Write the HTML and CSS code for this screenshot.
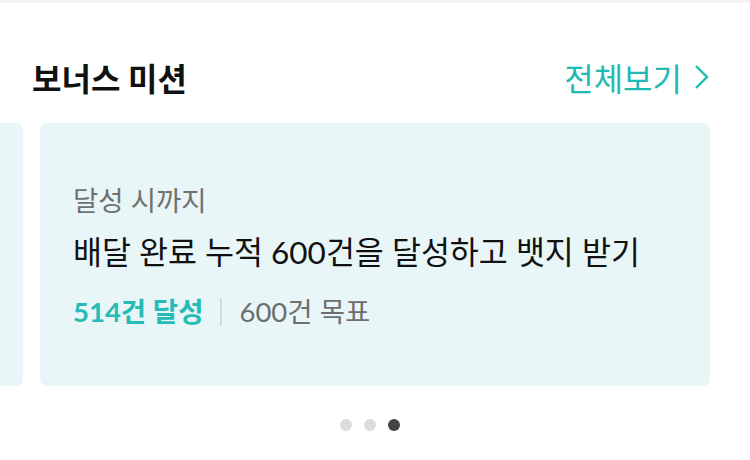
FILE: index.html
```html
<!DOCTYPE html>
<html lang="ko">
<head>
    <meta charset="UTF-8">
    <title>보너스 미션</title>
    <link rel="stylesheet" href="styles.css">
</head>
<body>
    <div class="topline"></div>

    <section class="mission">
        <div class="mission-head">
            <h2>보너스 미션</h2>
            <a class="more" href="#">전체보기
                <svg width="16" height="26" viewBox="0 0 16 26"><path d="M2 2 L13 13 L2 24" fill="none" stroke="#1fbab2" stroke-width="2.4"/></svg>
            </a>
        </div>

        <div class="slider">
            <div class="track">
                <div class="card"></div>
                <div class="card">
                    <p class="sub">달성 시까지</p>
                    <p class="title">배달 완료 누적 600건을 달성하고 뱃지 받기</p>
                    <p class="count"><b>514건 달성</b><span class="bar"></span><span>600건 목표</span></p>
                </div>
            </div>
        </div>

        <div class="dots">
            <span></span><span></span><span class="on"></span>
        </div>
    </section>
</body>
</html>
```

FILE: styles.css
```css
body {
    margin: 0;
    background: #fff;
    font-family: Lato, "Noto Sans CJK KR", sans-serif;
    overflow: hidden;
}

.topline {
    height: 3px;
    background: #f2f2f2;
}

.mission-head {
    display: flex;
    justify-content: space-between;
    align-items: center;
    padding: 51px 40px 0 32px;
    height: 46px;
}

.mission-head h2 {
    margin: 0;
    font-size: 32px;
    font-weight: 700;
    color: #111;
}

.more {
    display: flex;
    align-items: center;
    gap: 12px;
    font-size: 32px;
    color: #1fbab2;
    text-decoration: none;
}

.slider {
    margin-top: 23px;
    overflow: hidden;
}

.track {
    display: flex;
    gap: 17px;
    margin-left: -647px;
}

.card {
    flex: 0 0 670px;
    height: 263px;
    box-sizing: border-box;
    padding: 60px 33px 0;
    border-radius: 7px;
    background: #e8f6f8;
}

.card p {
    margin: 0;
}

.sub {
    font-size: 27.5px;
    line-height: 36px;
    color: #707070;
}

.title {
    margin-top: 13px !important;
    font-size: 31.5px;
    line-height: 40px;
    color: #111;
}

.count {
    margin-top: 22px !important;
    display: flex;
    align-items: center;
    font-size: 27.5px;
    line-height: 36px;
    color: #6e6e6e;
}

.count b {
    color: #24bcb5;
}

.bar {
    width: 2px;
    height: 28px;
    margin: 0 17px;
    background: #d8dcdd;
}

.dots {
    display: flex;
    justify-content: center;
    gap: 12px;
    margin-top: 33px;
    padding-right: 10px;
}

.dots span {
    width: 12px;
    height: 12px;
    border-radius: 50%;
    background: #dcdcdc;
}

.dots .on {
    background: #444;
}
```
